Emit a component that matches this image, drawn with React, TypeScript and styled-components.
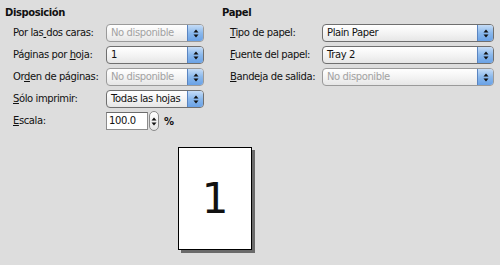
import * as React from 'react';
import styled, { createGlobalStyle } from 'styled-components';

const Global = createGlobalStyle`
    html, body {
        margin: 0;
        padding: 0;
        background: #dddddd;
    }
    body {
        font-family: "DejaVu Sans", sans-serif;
        font-size: 10px;
        letter-spacing: -0.4px;
        color: #111;
    }
`;

const Page = styled.div`
    width: 500px;
    height: 265px;
    background: #dddddd;
    padding: 6px 0 0 5px;
    box-sizing: border-box;
    overflow: hidden;
`;

const Columns = styled.div`
    display: flex;
`;

const Column = styled.div<{ $width: number }>`
    width: ${(p) => p.$width}px;
    display: flex;
    flex-direction: column;
`;

const Heading = styled.div`
    font-weight: bold;
    height: 14px;
    line-height: 14px;
    margin-bottom: 4px;
`;

const Form = styled.div<{ $label: number; $field: number }>`
    display: grid;
    grid-template-columns: ${(p) => p.$label}px ${(p) => p.$field}px;
    row-gap: 4px;
    padding-left: 8px;
`;

const Label = styled.label`
    height: 18px;
    line-height: 18px;
    white-space: nowrap;
`;

const Combo = styled.div<{ $disabled?: boolean }>`
    height: 18px;
    box-sizing: border-box;
    border: 1px solid ${(p) => (p.$disabled ? '#9a9a9a' : '#6f6f6f')};
    border-radius: 4px;
    background: linear-gradient(#ffffff, #f4f4f4 50%, #e6e6e6);
    display: flex;
    align-items: stretch;
    overflow: hidden;
    color: ${(p) => (p.$disabled ? '#a2a2a2' : '#111')};
`;

const ComboText = styled.div`
    flex: 1;
    padding-left: 4px;
    line-height: 16px;
    white-space: nowrap;
    overflow: hidden;
`;

const ComboButton = styled.div`
    width: 15px;
    background: linear-gradient(#c6dcf6, #8ab8ec 50%, #6aa2e6);
    border-left: 1px solid #5a84c0;
    display: flex;
    align-items: center;
    justify-content: center;
`;

const ScaleRow = styled.div`
    display: flex;
    align-items: center;
    height: 18px;
`;

const NumberBox = styled.div`
    width: 42px;
    height: 18px;
    box-sizing: border-box;
    background: #fff;
    border: 1px solid #8c8c8c;
    border-top-color: #6c6c6c;
    line-height: 16px;
    padding-left: 2px;
`;

const Spinner = styled.div`
    width: 10px;
    height: 20px;
    box-sizing: border-box;
    margin-left: 1px;
    border: 1px solid #8a8a8a;
    border-radius: 5px;
    background: linear-gradient(#ffffff, #e4e4e4);
    display: flex;
    align-items: center;
    justify-content: center;
`;

const Unit = styled.span`
    margin-left: 5px;
    font-weight: bold;
    font-size: 10px;
`;

const PreviewArea = styled.div`
    padding: 17px 0 0 173px;
`;

const Sheet = styled.div`
    width: 74px;
    height: 103px;
    box-sizing: border-box;
    background: #fff;
    border: 1px solid #000;
    box-shadow: 3px 3px 0 #6a6a6a;
    display: flex;
    align-items: center;
    justify-content: center;
    font-size: 42px;
    letter-spacing: 0;
    font-family: "DejaVu Sans", sans-serif;
`;

const Arrows = ({ height = 9 }: { height?: number }) => (
    <svg width="6" height={height} viewBox="0 0 6 9">
        <path d="M3 0.5 L5.5 3.5 L0.5 3.5 Z" fill="#111" />
        <path d="M3 8.5 L5.5 5.5 L0.5 5.5 Z" fill="#111" />
    </svg>
);

const Select = ({ value, disabled }: { value: string; disabled?: boolean }) => (
    <Combo $disabled={disabled}>
        <ComboText>{value}</ComboText>
        <ComboButton>
            <Arrows />
        </ComboButton>
    </Combo>
);

const Mn = ({ text, at }: { text: string; at: number }) => (
    <>
        {text.slice(0, at)}
        <u>{text.charAt(at)}</u>
        {text.slice(at + 1)}
    </>
);

export default function App() {
    return (
        <Page>
            <Global />
            <Columns>
                <Column $width={217}>
                    <Heading>Disposición</Heading>
                    <Form $label={93} $field={98}>
                        <Label><Mn text="Por las dos caras:" at={7} /></Label>
                        <Select value="No disponible" disabled />
                        <Label><Mn text="Páginas por hoja:" at={12} /></Label>
                        <Select value="1" />
                        <Label><Mn text="Orden de páginas:" at={2} /></Label>
                        <Select value="No disponible" disabled />
                        <Label><Mn text="Sólo imprimir:" at={0} /></Label>
                        <Select value="Todas las hojas" />
                        <Label><Mn text="Escala:" at={0} /></Label>
                        <ScaleRow>
                            <NumberBox>100.0</NumberBox>
                            <Spinner>
                                <Arrows height={11} />
                            </Spinner>
                            <Unit>%</Unit>
                        </ScaleRow>
                    </Form>
                </Column>
                <Column $width={278}>
                    <Heading>Papel</Heading>
                    <Form $label={92} $field={172}>
                        <Label><Mn text="Tipo de papel:" at={0} /></Label>
                        <Select value="Plain Paper" />
                        <Label><Mn text="Fuente del papel:" at={0} /></Label>
                        <Select value="Tray 2" />
                        <Label><Mn text="Bandeja de salida:" at={0} /></Label>
                        <Select value="No disponible" disabled />
                    </Form>
                </Column>
            </Columns>
            <PreviewArea>
                <Sheet>1</Sheet>
            </PreviewArea>
        </Page>
    );
}
